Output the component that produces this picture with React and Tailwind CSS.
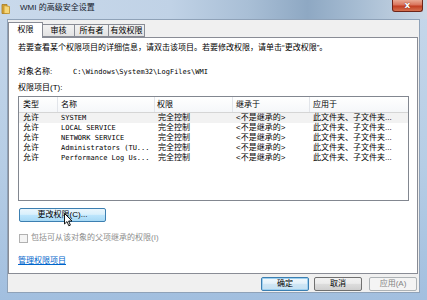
export default function App() {
  const rows = [
    ["SYSTEM", true],
    ["LOCAL SERVICE", false],
    ["NETWORK SERVICE", false],
    ["Administrators (TU...", false],
    ["Performance Log Us...", false],
  ];
  return (
    <div className="relative w-[427px] h-[300px] overflow-hidden flex flex-col bg-[linear-gradient(180deg,#c6d7ea_0%,#b6cde5_55%,#a2bfdf_100%)] font-['Liberation_Sans','Noto_Sans_CJK_SC',sans-serif] text-[8px] leading-[10px] text-black">
      {/* title bar */}
      <div className="h-[19px] shrink-0 flex items-start bg-[linear-gradient(90deg,#c9d9eb_0%,#c0d2e6_40%,#a9bfd6_58%,#8ea8c3_72%,#a7bdd3_84%,#cbd8e6_100%)]">
        <svg className="ml-[1px] mt-[4px]" width="9" height="10" viewBox="0 0 9 10">
          <path d="M1 0.5 L6 0.5 L6 9.5 L1 9.5 Z" fill="#d9a73a" stroke="#a77a1c" strokeWidth="0.8" />
          <path d="M3 1.5 L8.5 2.5 L8.5 9.5 L3 9.5 Z" fill="#f6d779" stroke="#c09028" strokeWidth="0.8" />
        </svg>
        <span className="ml-[10px] mt-[3px] text-[8px] leading-[10px] text-[#15202c]">WMI 的高级安全设置</span>
        <div className="ml-auto mr-[4px] w-[31px] h-[12px] rounded-b-[3px] border border-t-0 border-[#6e2418] bg-[linear-gradient(180deg,#e9a993_0%,#d9735b_45%,#c23e22_55%,#d5714f_100%)] flex items-center justify-center">
          <span className="text-white font-bold text-[9px] leading-[9px] font-['DejaVu_Sans',sans-serif] [text-shadow:0_0_1px_#4a1208]">x</span>
        </div>
      </div>

      {/* client */}
      <div className="mx-[7px] h-[274px] shrink-0 bg-[#f0f0f0] border border-[#8fa2b8] pt-[2px] flex flex-col">
        {/* tabs */}
        <div className="h-[15px] flex items-end">
          <div className="relative z-10 w-[35px] h-[16px] -mb-[1px] bg-white border border-b-0 border-[#898c95] flex items-start justify-center pt-[2px]">权限</div>
          <div className="w-[32px] h-[13px] border border-l-0 border-[#898c95] bg-[linear-gradient(180deg,#f2f2f2,#e3e3e3)] flex items-center justify-center">审核</div>
          <div className="w-[34px] h-[13px] border border-l-0 border-[#898c95] bg-[linear-gradient(180deg,#f2f2f2,#e3e3e3)] flex items-center justify-center">所有者</div>
          <div className="w-[36px] h-[13px] border border-l-0 border-[#898c95] bg-[linear-gradient(180deg,#f2f2f2,#e3e3e3)] flex items-center justify-center">有效权限</div>
        </div>

        {/* panel */}
        <div className="h-[237px] mr-[1px] bg-white border border-[#898c95] pt-[5px] pl-[9px] flex flex-col">
          <div className="h-[10px] whitespace-nowrap">若要查看某个权限项目的详细信息，请双击该项目。若要修改权限，请单击“更改权限”。</div>
          <div className="mt-[14px] h-[10px] flex items-center whitespace-nowrap">
            <span className="w-[55px]">对象名称:</span>
            <span className="font-['DejaVu_Sans_Mono',monospace] text-[7px]">C:\Windows\System32\LogFiles\WMI</span>
          </div>
          <div className="mt-[6px] h-[10px]">权限项目(T):</div>

          {/* list */}
          <div className="mt-[3px] w-[391px] h-[105px] border border-[#828790] bg-white flex flex-col">
            <div className="h-[16px] grid grid-cols-[39px_97px_78px_77px_1fr] border-b border-[#d5d5d5] bg-[linear-gradient(180deg,#ffffff,#f5f7f9)]">
              <div className="pl-[4px] pt-[1px] flex items-center border-r border-[#e2e5ea]">类型</div>
              <div className="pl-[3px] pt-[1px] flex items-center border-r border-[#e2e5ea]">名称</div>
              <div className="pl-[2px] pt-[1px] flex items-center border-r border-[#e2e5ea]">权限</div>
              <div className="pl-[3px] pt-[1px] flex items-center border-r border-[#e2e5ea]">继承于</div>
              <div className="pl-[3px] pt-[1px] flex items-center">应用于</div>
            </div>
            {rows.map(([name, sel]) => (
              <div
                key={name}
                className={
                  sel
                    ? "h-[10px] grid grid-cols-[39px_97px_78px_77px_1fr] items-center bg-[#f2f2f2]"
                    : "h-[10px] grid grid-cols-[39px_97px_78px_77px_1fr] items-center"
                }
              >
                <div className="pl-[4px]">允许</div>
                <div className="pl-[3px] font-['DejaVu_Sans_Mono',monospace] text-[7px] whitespace-nowrap">{name}</div>
                <div className="pl-[3px]">完全控制</div>
                <div className="pl-[3px] whitespace-nowrap">&lt;不是继承的&gt;</div>
                <div className="pl-[3px] whitespace-nowrap">此文件夹、子文件夹...</div>
              </div>
            ))}
          </div>

          <div className="mt-[7px] ml-[1px] w-[87px] h-[14px] rounded-[2px] border border-[#3c7fb1] bg-[linear-gradient(180deg,#eaf6fd_0%,#d9f0fc_45%,#bee6fd_50%,#a7d9f5_100%)] flex items-center justify-center">
            更改权限(C)...
          </div>

          <div className="mt-[11px] h-[10px] flex items-center">
            <div className="ml-[1px] w-[9px] h-[9px] border border-[#b1b1b1] bg-[#f4f4f4]"></div>
            <span className="ml-[3px] text-[#8d8d8d] whitespace-nowrap">包括可从该对象的父项继承的权限(I)</span>
          </div>

          <div className="mt-[13px] h-[10px] text-[#0066cc] underline">管理权限项目</div>
        </div>

        {/* bottom buttons */}
        <div className="mt-[3px] h-[14px] flex justify-end pr-[2px]">
          <div className="w-[48px] h-[14px] rounded-[2px] border border-[#3c7fb1] bg-[linear-gradient(180deg,#f2f9fd_0%,#e3f1fa_45%,#cfe6f5_50%,#c4e0f2_100%)] flex items-center justify-center shadow-[inset_0_0_0_1px_#9ed0f0]">确定</div>
          <div className="ml-[5px] w-[48px] h-[14px] rounded-[2px] border border-[#707070] bg-[linear-gradient(180deg,#f2f2f2_0%,#ebebeb_45%,#dddddd_50%,#cfcfcf_100%)] flex items-center justify-center">取消</div>
          <div className="ml-[7px] w-[48px] h-[14px] rounded-[2px] border border-[#adb2b5] bg-[#f4f4f4] text-[#838383] flex items-center justify-center">应用(A)</div>
        </div>
      </div>

      {/* cursor */}
      <svg className="absolute left-[64px] top-[213px]" width="9" height="14" viewBox="0 0 9 14">
        <path d="M0.5 0.5 L0.5 11 L3 8.6 L4.8 12.8 L6.4 12.1 L4.6 8 L8 8 Z" fill="#ffffff" stroke="#000000" strokeWidth="0.9" strokeLinejoin="round" />
      </svg>
    </div>
  );
}
